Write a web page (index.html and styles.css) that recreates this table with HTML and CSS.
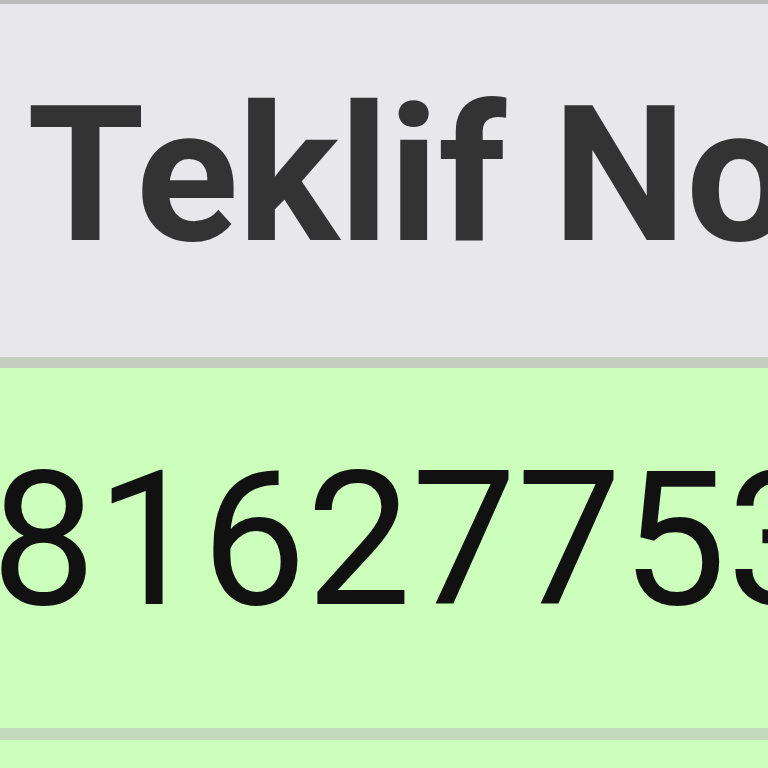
FILE: index.html
```html
<!DOCTYPE html>
<html>
<head>
<meta charset="utf-8">
<link rel="stylesheet" href="styles.css">
</head>
<body>
<div class="table">
  <div class="head-row">
    <span class="head-cell">Teklif No</span>
  </div>
  <div class="data-row">
    <span class="data-cell">81627753</span>
  </div>
  <div class="data-row next"></div>
</div>
</body>
</html>
```
FILE: styles.css
```css
html, body {
  margin: 0;
  padding: 0;
  width: 768px;
  height: 768px;
  overflow: hidden;
  background: #ccffbb;
}
.table {
  display: flex;
  flex-direction: column;
  width: 768px;
  height: 768px;
  overflow: hidden;
  font-family: Roboto, "Liberation Sans", sans-serif;
  white-space: nowrap;
}
.head-row {
  box-sizing: border-box;
  flex: none;
  height: 368px;
  border-top: 4px solid #bcbcbc;
  border-bottom: 11px solid #c4cebf;
  background: #e8e8ea;
  padding-top: 76px;
  padding-left: 27px;
  overflow: hidden;
}
.head-cell {
  font-size: 190px;
  line-height: 1;
  font-weight: 700;
  letter-spacing: -0.5px;
  color: #333333;
}
.data-row {
  box-sizing: border-box;
  flex: none;
  height: 372px;
  border-bottom: 12px solid #c4d8bc;
  background: #ccffbb;
  padding-top: 79px;
  overflow: hidden;
}
.data-row.next {
  flex: 1;
  height: auto;
  border-bottom: 0;
}
.data-cell {
  display: block;
  margin-left: -9px;
  font-size: 187px;
  line-height: 1;
  color: #111111;
}
```
